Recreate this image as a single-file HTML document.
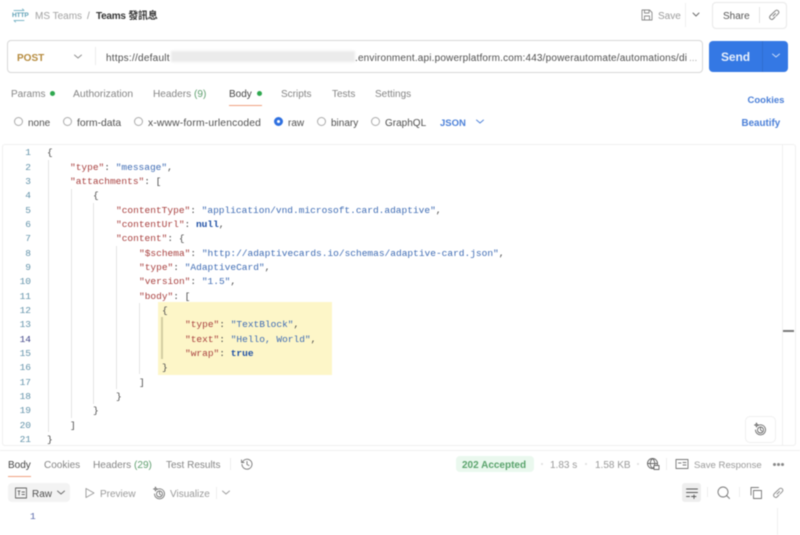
<!DOCTYPE html>
<html><head><meta charset="utf-8">
<style>
html,body{margin:0;padding:0;background:#fff}
#p{position:relative;width:800px;height:535px;overflow:hidden;background:#fff;font-family:"Liberation Sans","Noto Sans CJK TC",sans-serif;font-size:10px;color:#6b6b6b;filter:blur(.45px)}
.t{position:absolute;white-space:nowrap;line-height:14px}
.b{position:absolute}
.r{position:absolute;width:7px;height:7px;border:1px solid #aaa;border-radius:50%;top:117px}
.dot{position:absolute;width:5px;height:5px;border-radius:50%;background:#2fa84f}
.c{position:absolute;font-family:"Liberation Mono",monospace;font-size:9.52px;line-height:14px;white-space:pre;color:#4a4a4a}
.n{position:absolute;width:31px;text-align:right;left:0;font-family:"Liberation Mono",monospace;font-size:9.52px;line-height:14px;color:#6393aa}
i{font-style:normal}
.k{color:#a8403f}.s{color:#3f6cb4}.v{color:#1f50a5;font-weight:bold}
.g{position:absolute;width:1px;background:#e3e3e3}
svg{position:absolute;fill:none;stroke-linecap:round;stroke-linejoin:round}
</style></head><body><div id="p">
<!-- header -->
<div class="t" style="left:12px;top:9px;font-size:6.5px;font-weight:bold;color:#5c9fb5;letter-spacing:-.1px">HTTP</div>
<svg style="left:12px;top:8px" width="14" height="15" stroke="#7fb7c9" stroke-width=".9"><path d="M2 2.5H12M10.5 1L12 2.5M2 12.5H12M2 12.5L3.5 14"/></svg>
<div class="t" style="left:35px;top:10px;font-size:10px;color:#a2a2a2">MS Teams</div>
<div class="t" style="left:87px;top:10px;font-size:10px;color:#9a9a9a">/</div>
<div class="t" style="left:96px;top:10px;font-size:10px;font-weight:bold;color:#333;letter-spacing:-.25px">Teams 發訊息</div>
<svg style="left:640px;top:8px" width="14" height="14" stroke="#8a8a8a" stroke-width=".9"><path d="M2 2H9.5L12 4.5V12H2ZM4.5 2V5H9V2M4.5 12V8H9.5V12"/></svg>
<div class="t" style="left:658px;top:10px;font-size:10px;color:#9a9a9a">Save</div>
<div class="b" style="left:685px;top:3px;width:1px;height:24px;background:#f0f0f0"></div>
<svg style="left:691px;top:11px" width="10" height="8" stroke="#666" stroke-width=".9"><path d="M2 2L5 5L8 2"/></svg>
<div class="b" style="left:712px;top:2px;width:73px;height:25px;border:1px solid #e8e8e8;border-radius:4px"></div>
<div class="t" style="left:723px;top:10px;font-size:10px;color:#555">Share</div>
<div class="b" style="left:759px;top:7px;width:1px;height:16px;background:#e3e3e3"></div>
<svg style="left:767px;top:8px" width="14" height="14" stroke="#777" stroke-width=".9"><path d="M6 8L8.5 5.5M5.5 5.5L3 8C1.5 10 4.5 12.5 6 11L8 9M6 5L8.5 2.7C10.5 1.2 13 3.7 11.2 5.7L9 8"/></svg>
<!-- url bar -->
<div class="b" style="left:7px;top:40px;width:694px;height:31px;border:1px solid #d8d8d8;border-radius:4px"></div>
<div class="t" style="left:17px;top:51.5px;font-size:10px;font-weight:bold;color:#b58a3c">POST</div>
<svg style="left:73px;top:53px" width="10" height="8" stroke="#8a8a8a" stroke-width=".9"><path d="M1.5 2L5 5L8.5 2"/></svg>
<div class="b" style="left:95px;top:47px;width:1px;height:18px;background:#ececec"></div>
<div class="t" style="left:106px;top:51.5px;font-size:10px;color:#4f4f4f;letter-spacing:.25px">https://default</div>
<div class="b" style="left:171px;top:51px;width:184px;height:11px;background:#ebebeb;filter:blur(1px)"></div>
<div class="t" style="left:355px;top:51.5px;font-size:10px;color:#4f4f4f;letter-spacing:.17px">.environment.api.powerplatform.com:443/powerautomate/automations/di</div>
<div class="t" style="left:689px;top:51.5px;font-size:10px;color:#aaa">...</div>
<div class="b" style="left:709px;top:41px;width:79px;height:31px;background:#3478e4;border-radius:4px"></div>
<div class="b" style="left:762px;top:41px;width:1px;height:31px;background:#2f6dd0"></div>
<div class="t" style="left:721px;top:49.5px;font-size:12px;font-weight:bold;color:#e6effc;letter-spacing:-.1px">Send</div>
<svg style="left:771px;top:52px" width="10" height="8" stroke="#cfe0fa" stroke-width=".9"><path d="M1.5 2L5 5L8.5 2"/></svg>
<!-- tabs -->
<div class="t" style="left:11px;top:88px;color:#858585">Params</div><div class="dot" style="left:49.5px;top:90.5px"></div>
<div class="t" style="left:73px;top:88px;color:#858585;font-size:10.3px">Authorization</div>
<div class="t" style="left:153px;top:88px;color:#858585;font-size:10.1px">Headers <span style="color:#5f9f6f">(9)</span></div>
<div class="t" style="left:229px;top:88px;color:#444">Body</div><div class="dot" style="left:256.5px;top:90.5px"></div>
<div class="b" style="left:229px;top:105px;width:33px;height:1px;background:#f0a080"></div>
<div class="t" style="left:281px;top:88px;color:#858585">Scripts</div>
<div class="t" style="left:332px;top:88px;color:#858585">Tests</div>
<div class="t" style="left:375px;top:88px;color:#858585">Settings</div>
<div class="t" style="left:747.5px;top:94px;font-weight:bold;font-size:9.5px;color:#4a7fd8">Cookies</div>
<!-- radios -->
<div class="r" style="left:14px"></div><div class="t" style="left:28px;top:116.5px;color:#4f4f4f">none</div>
<div class="r" style="left:63px"></div><div class="t" style="left:77px;top:116.5px;color:#4f4f4f;font-size:10.3px">form-data</div>
<div class="r" style="left:134px"></div><div class="t" style="left:148px;top:116.5px;color:#4f4f4f;font-size:10.3px;letter-spacing:.18px">x-www-form-urlencoded</div>
<div class="b" style="left:274px;top:117px;width:3px;height:3px;border:3px solid #2f70e0;border-radius:50%"></div><div class="t" style="left:288px;top:116.5px;color:#4f4f4f">raw</div>
<div class="r" style="left:317px"></div><div class="t" style="left:331px;top:116.5px;color:#4f4f4f">binary</div>
<div class="r" style="left:371px"></div><div class="t" style="left:385px;top:116.5px;color:#4f4f4f">GraphQL</div>
<div class="t" style="left:440px;top:116.5px;font-weight:bold;font-size:9.5px;color:#4a7fd8">JSON</div>
<svg style="left:475px;top:118px" width="10" height="8" stroke="#4a7fd8" stroke-width=".9"><path d="M1.5 2L5 5L8.5 2"/></svg>
<div class="t" style="left:741.5px;top:116.5px;font-weight:bold;font-size:9.8px;color:#4a7fd8">Beautify</div>
<!-- editor -->
<div class="b" style="left:2px;top:144px;width:792px;height:300px;border:1px solid #efefef;border-top-color:#f0f0f0;border-radius:3px"></div>
<div class="b" style="left:782px;top:145px;width:1px;height:300px;background:#f0f0f0"></div>
<div class="b" style="left:783px;top:330px;width:11px;height:2px;background:#7a7a7a"></div>
<div class="b" style="left:158px;top:302px;width:174px;height:72.5px;background:#fdf6c8"></div>
<div class="g" style="left:47.5px;top:160px;height:272px"></div>
<div class="g" style="left:70.5px;top:189px;height:229px"></div>
<div class="g" style="left:93px;top:203px;height:201px"></div>
<div class="g" style="left:116px;top:246px;height:143px"></div>
<div class="g" style="left:139px;top:303px;height:71px"></div>
<div class="b" style="left:161px;top:317px;width:1.5px;height:42px;background:#d3cea2"></div>
<div id="code">
<div class="n" style="top:146.3px">1</div><div class="c" style="top:146.3px;left:47px">{</div>
<div class="n" style="top:160.63px">2</div><div class="c" style="top:160.63px;left:70px"><i class="k">"type"</i>: <i class="s">"message"</i>,</div>
<div class="n" style="top:174.96px">3</div><div class="c" style="top:174.96px;left:70px"><i class="k">"attachments"</i>: [</div>
<div class="n" style="top:189.29px">4</div><div class="c" style="top:189.29px;left:93px">{</div>
<div class="n" style="top:203.62px">5</div><div class="c" style="top:203.62px;left:116px"><i class="k">"contentType"</i>: <i class="s">"application/vnd.microsoft.card.adaptive"</i>,</div>
<div class="n" style="top:217.95px">6</div><div class="c" style="top:217.95px;left:116px"><i class="k">"contentUrl"</i>: <i class="v">null</i>,</div>
<div class="n" style="top:232.28px">7</div><div class="c" style="top:232.28px;left:116px"><i class="k">"content"</i>: {</div>
<div class="n" style="top:246.61px">8</div><div class="c" style="top:246.61px;left:139px"><i class="k">"$schema"</i>: <i class="s">"http://adaptivecards.io/schemas/adaptive-card.json"</i>,</div>
<div class="n" style="top:260.94px">9</div><div class="c" style="top:260.94px;left:139px"><i class="k">"type"</i>: <i class="s">"AdaptiveCard"</i>,</div>
<div class="n" style="top:275.27px">10</div><div class="c" style="top:275.27px;left:139px"><i class="k">"version"</i>: <i class="s">"1.5"</i>,</div>
<div class="n" style="top:289.6px">11</div><div class="c" style="top:289.6px;left:139px"><i class="k">"body"</i>: [</div>
<div class="n" style="top:303.93px">12</div><div class="c" style="top:303.93px;left:162px">{</div>
<div class="n" style="top:318.26px">13</div><div class="c" style="top:318.26px;left:185px"><i class="k">"type"</i>: <i class="s">"TextBlock"</i>,</div>
<div class="n" style="top:332.59px;color:#3f4488">14</div><div class="c" style="top:332.59px;left:185px"><i class="k">"text"</i>: <i class="s">"Hello, World"</i>,</div>
<div class="n" style="top:346.92px">15</div><div class="c" style="top:346.92px;left:185px"><i class="k">"wrap"</i>: <i class="v">true</i></div>
<div class="n" style="top:361.25px">16</div><div class="c" style="top:361.25px;left:162px">}</div>
<div class="n" style="top:375.58px">17</div><div class="c" style="top:375.58px;left:139px">]</div>
<div class="n" style="top:389.91px">18</div><div class="c" style="top:389.91px;left:116px">}</div>
<div class="n" style="top:404.24px">19</div><div class="c" style="top:404.24px;left:93px">}</div>
<div class="n" style="top:418.57px">20</div><div class="c" style="top:418.57px;left:70px">]</div>
<div class="n" style="top:432.9px">21</div><div class="c" style="top:432.9px;left:47px">}</div>
</div>
<div class="b" style="left:745px;top:416px;width:29px;height:25px;border:1px solid #f0f0f0;border-radius:5px;background:#fff"></div>
<svg style="left:753px;top:422px" width="14" height="14" stroke="#666" stroke-width=".9"><path d="M5 3.5A5 5 0 1 1 2.5 8"/><circle cx="7.5" cy="8" r="3"/><path d="M7.5 6V8L9 9M3.5 1L4 2.5L5.5 3L4 3.5L3.5 5L3 3.5L1.5 3L3 2.5Z"/></svg>
<!-- response -->
<div class="b" style="left:0;top:450px;width:800px;height:1px;background:#f0f0f0"></div>
<div class="t" style="left:8px;top:459px;color:#444">Body</div>
<div class="b" style="left:8px;top:476px;width:23px;height:1px;background:#f0a080"></div>
<div class="t" style="left:44px;top:459px;color:#858585">Cookies</div>
<div class="t" style="left:93px;top:459px;color:#858585;font-size:10.1px">Headers <span style="color:#5f9f6f">(29)</span></div>
<div class="t" style="left:166px;top:459px;color:#858585">Test Results</div>
<div class="b" style="left:230px;top:458px;width:1px;height:12px;background:#eee"></div>
<svg style="left:240px;top:457px" width="14" height="14" stroke="#777" stroke-width=".9"><path d="M2.5 5A5 5 0 1 1 2 7.5M1.5 3V5.5H4M7 4.5V7.5L9 8.5"/></svg>
<div class="b" style="left:456px;top:456px;width:78px;height:16px;background:#eaf8ee;border-radius:4px"></div>
<div class="t" style="left:462px;top:459px;font-weight:bold;color:#5aa36c;font-size:10px">202 Accepted</div>
<div class="b" style="left:541px;top:463px;width:2px;height:2px;background:#ddd;border-radius:50%"></div>
<div class="t" style="left:550px;top:459px;color:#9a9a9a">1.83 s</div>
<div class="b" style="left:585px;top:463px;width:2px;height:2px;background:#ddd;border-radius:50%"></div>
<div class="t" style="left:595px;top:459px;color:#9a9a9a">1.58 KB</div>
<div class="b" style="left:637px;top:463px;width:2px;height:2px;background:#ddd;border-radius:50%"></div>
<svg style="left:646px;top:457px" width="14" height="14" stroke="#666" stroke-width=".9"><circle cx="6.5" cy="6.5" r="5"/><path d="M1.5 6.5H11.5M6.5 1.5C3.5 4.5 3.5 8.5 6.5 11.5M6.5 1.5C9.5 4.5 9.5 8.5 6.5 11.5"/><rect x="8" y="8.5" width="5" height="4" fill="#fff"/></svg>
<div class="b" style="left:666px;top:458px;width:1px;height:12px;background:#eee"></div>
<svg style="left:675px;top:458px" width="14" height="12" stroke="#777" stroke-width=".9"><rect x="1" y="1.5" width="12" height="9"/><path d="M3.5 5H6M8 4.5H11M8 7H11"/></svg>
<div class="t" style="left:694px;top:459px;color:#9a9a9a;font-size:9.6px">Save Response</div>
<div class="b" style="left:773px;top:463px;width:3px;height:3px;background:#888;border-radius:50%"></div>
<div class="b" style="left:777px;top:463px;width:3px;height:3px;background:#888;border-radius:50%"></div>
<div class="b" style="left:781px;top:463px;width:3px;height:3px;background:#888;border-radius:50%"></div>
<div class="b" style="left:8px;top:483px;width:62px;height:19px;background:#f3f3f3;border-radius:4px"></div>
<svg style="left:14px;top:486px" width="14" height="14" stroke="#666" stroke-width=".9"><rect x="1.5" y="2" width="11" height="10"/><path d="M4 5H6M5 5V9M8 6H10.5M8 8.5H10.5"/></svg>
<div class="t" style="left:32px;top:487.5px;color:#4f4f4f">Raw</div>
<svg style="left:56px;top:489px" width="10" height="8" stroke="#666" stroke-width=".9"><path d="M1.5 2L5 5L8.5 2"/></svg>
<svg style="left:84px;top:487px" width="12" height="12" stroke="#999" stroke-width=".9"><path d="M2 1.5L10 6L2 10.5Z"/></svg>
<div class="t" style="left:100px;top:487.5px;color:#9a9a9a">Preview</div>
<svg style="left:152px;top:486px" width="14" height="14" stroke="#777" stroke-width=".9"><path d="M5 3.5A5 5 0 1 1 2.5 8"/><circle cx="7.5" cy="8" r="3"/><path d="M7.5 6V8L9 9M3.5 1L4 2.5L5.5 3L4 3.5L3.5 5L3 3.5L1.5 3L3 2.5Z"/></svg>
<div class="t" style="left:170px;top:487.5px;color:#9a9a9a">Visualize</div>
<div class="b" style="left:216px;top:487px;width:1px;height:12px;background:#eee"></div>
<svg style="left:221px;top:489px" width="10" height="8" stroke="#999" stroke-width=".9"><path d="M1.5 2L5 5L8.5 2"/></svg>
<div class="b" style="left:682px;top:483px;width:19px;height:19px;background:#eee;border-radius:3px"></div>
<svg style="left:685px;top:486px" width="14" height="14" stroke="#555" stroke-width=".9"><path d="M1.5 3H12.5M1.5 6.5H12.5M1.5 10.5H4.5M6.5 10.5H11M9 9V12.5"/></svg>
<div class="b" style="left:707px;top:487px;width:1px;height:10px;background:#eee"></div>
<svg style="left:716px;top:485px" width="15" height="15" stroke="#777" stroke-width=".9"><circle cx="7" cy="7" r="5"/><path d="M10.5 10.5L13.5 13.5"/></svg>
<div class="b" style="left:739px;top:487px;width:1px;height:10px;background:#eee"></div>
<svg style="left:749px;top:486px" width="14" height="14" stroke="#777" stroke-width=".9"><path d="M9.5 1.5H2V9"/><rect x="4.5" y="4.5" width="8" height="8"/></svg>
<svg style="left:771px;top:486px" width="14" height="14" stroke="#888" stroke-width=".9"><path d="M6 8L8.5 5.5M5.5 5.5L3 8C1.5 10 4.5 12.5 6 11L8 9M6 5L8.5 2.7C10.5 1.2 13 3.7 11.2 5.7L9 8"/></svg>
<div class="t" style="left:30px;top:510px;font-family:'Liberation Mono',monospace;color:#5565a8;font-size:9.52px;">1</div>
<div class="b" style="left:777px;top:508px;width:1px;height:27px;background:#f0f0f0"></div>
</div></body></html>
